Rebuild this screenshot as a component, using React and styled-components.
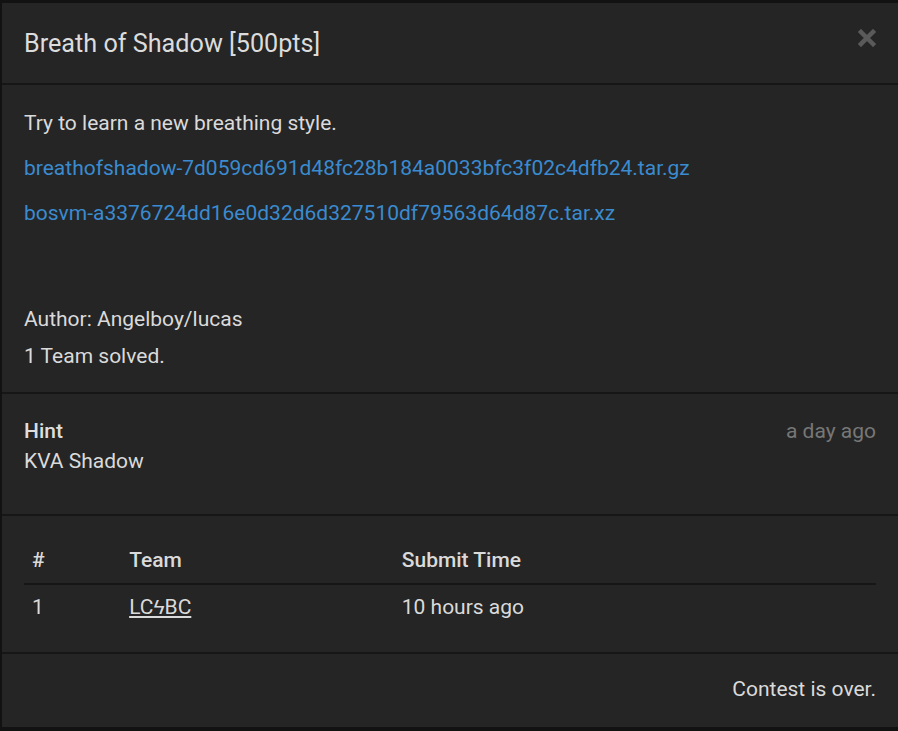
import React from 'react'
import styled, { createGlobalStyle } from 'styled-components'

const Global = createGlobalStyle`
  html, body {
    margin: 0;
    padding: 0;
    background: #121212;
  }
  body {
    font-family: Roboto, "Liberation Sans", sans-serif;
    font-size: 21px;
    color: #dadada;
  }
`

const Backdrop = styled.div`
  padding: 3px 0 3px 2px;
  min-height: 731px;
  box-sizing: border-box;
`

const Modal = styled.div`
  background: #252525;
  display: flex;
  flex-direction: column;
`

const Section = styled.div`
  border-top: ${p => (p.first ? 'none' : '2px solid #161616')};
  padding: ${p => p.pad || '25px 22px 22px'};
`

const Header = styled(Section)`
  height: 80px;
  box-sizing: border-box;
  padding: 0 22px;
  display: flex;
  align-items: center;
  justify-content: space-between;
`

const Title = styled.h4`
  margin: 0;
  font-size: 25.2px;
  font-weight: 400;
  color: #dcdcdc;
  line-height: 1;
  padding-top: 1px;
`

const Close = styled.button`
  background: none;
  border: none;
  padding: 0;
  margin-top: -10px;
  cursor: pointer;
  display: flex;
`

const Para = styled.p`
  margin: 0 0 ${p => p.gap || 18}px 0;
  line-height: 27px;
  &:last-child { margin-bottom: 0; }
`

const FileLink = styled.a`
  color: #3a8bd0;
  text-decoration: none;
`

const HintRow = styled.div`
  display: flex;
  justify-content: space-between;
  line-height: 30px;
`

const HintTitle = styled.div`
  font-weight: 500;
  color: #dedede;
`

const Ago = styled.span`
  color: #777;
`

const Table = styled.table`
  width: 100%;
  border-collapse: collapse;
  th, td {
    text-align: left;
    padding: 9px 8px;
    line-height: 27px;
  }
  th {
    font-weight: 500;
    border-bottom: 2px solid #161616;
  }
`

const TeamLink = styled.a`
  color: #dadada;
  text-decoration: underline;
`

const Footer = styled(Section)`
  text-align: right;
  line-height: 27px;
`

const CloseIcon = () => (
  <svg width="18" height="18" viewBox="0 0 18 18">
    <path d="M3 3 L15 15 M15 3 L3 15" stroke="#5a5a5a" strokeWidth="4.5" strokeLinecap="square" />
  </svg>
)

export default function App() {
  return (
    <>
      <Global />
      <Backdrop>
        <Modal>
          <Header first>
            <Title>Breath of Shadow [500pts]</Title>
            <Close aria-label="close"><CloseIcon /></Close>
          </Header>
          <Section>
            <Para>Try to learn a new breathing style.</Para>
            <Para><FileLink href="#">breathofshadow-7d059cd691d48fc28b184a0033bfc3f02c4dfb24.tar.gz</FileLink></Para>
            <Para gap={79}><FileLink href="#">bosvm-a3376724dd16e0d32d6d327510df79563d64d87c.tar.xz</FileLink></Para>
            <Para gap={10}>Author: Angelboy/lucas</Para>
            <Para>1 Team solved.</Para>
          </Section>
          <Section pad="22px 22px 38px">
            <HintRow>
              <HintTitle>Hint</HintTitle>
              <Ago>a day ago</Ago>
            </HintRow>
            <HintRow>KVA Shadow</HintRow>
          </Section>
          <Section pad="22px 22px 22px">
            <Table>
              <colgroup>
                <col style={{ width: '11.4%' }} />
                <col style={{ width: '32%' }} />
                <col />
              </colgroup>
              <thead>
                <tr><th>#</th><th>Team</th><th>Submit Time</th></tr>
              </thead>
              <tbody>
                <tr><td>1</td><td><TeamLink href="#">LCϟBC</TeamLink></td><td>10 hours ago</td></tr>
              </tbody>
            </Table>
          </Section>
          <Footer pad="22px 22px 24px">Contest is over.</Footer>
        </Modal>
      </Backdrop>
    </>
  )
}
